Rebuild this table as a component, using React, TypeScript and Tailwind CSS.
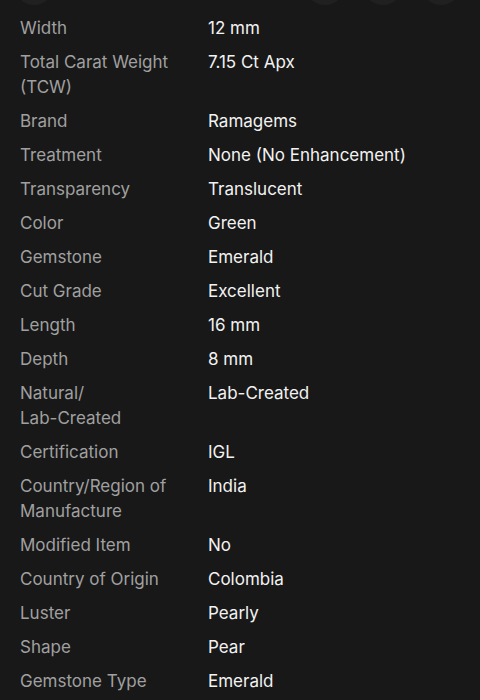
import type { ReactNode } from "react";

const specs: [ReactNode, string][] = [
  ["Width", "12 mm"],
  ["Total Carat Weight (TCW)", "7.15 Ct Apx"],
  ["Brand", "Ramagems"],
  ["Treatment", "None (No Enhancement)"],
  ["Transparency", "Translucent"],
  ["Color", "Green"],
  ["Gemstone", "Emerald"],
  ["Cut Grade", "Excellent"],
  ["Length", "16 mm"],
  ["Depth", "8 mm"],
  [
    <>
      Natural/
      <br />
      Lab-Created
    </>,
    "Lab-Created",
  ],
  ["Certification", "IGL"],
  ["Country/Region of Manufacture", "India"],
  ["Modified Item", "No"],
  ["Country of Origin", "Colombia"],
  ["Luster", "Pearly"],
  ["Shape", "Pear"],
  ["Gemstone Type", "Emerald"],
];

export default function App() {
  return (
    <div
      className="min-h-[700px] w-full overflow-hidden bg-[#181818]"
      style={{ fontFamily: "Inter, 'Noto Sans', sans-serif" }}
    >
      {/* bottoms of the round buttons cut off at the top */}
      <div className="-mt-[35px] flex items-center pl-[14px] pr-[19px]">
        <div className="h-10 w-10 rounded-full bg-[#202020]" />
        <div className="ml-auto flex gap-[18px]">
          <div className="h-10 w-10 rounded-full bg-[#202020]" />
          <div className="h-10 w-10 rounded-full bg-[#202020]" />
          <div className="h-10 w-10 rounded-full bg-[#202020]" />
        </div>
      </div>

      <dl className="grid grid-cols-[172px_1fr] gap-x-4 gap-y-[9px] px-5 pt-[11px] text-[17px] leading-[25px]">
        {specs.map(([label, value], i) => (
          <div key={i} className="contents">
            <dt className="text-[#a0a0a0]">{label}</dt>
            <dd className="text-[#f2f2f2]">{value}</dd>
          </div>
        ))}
      </dl>
    </div>
  );
}
